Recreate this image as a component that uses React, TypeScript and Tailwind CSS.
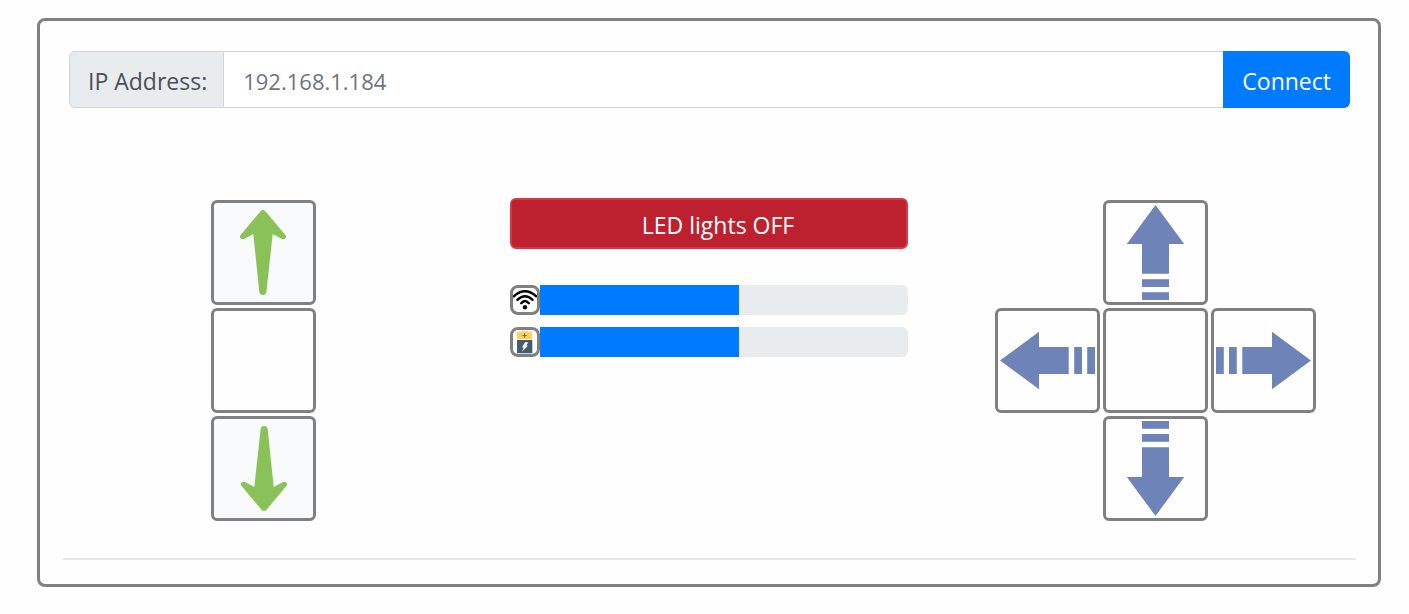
import type { ReactNode } from "react";

function GreenArrow({ down = false }: { down?: boolean }) {
  return (
    <svg viewBox="0 0 99 99" className="block size-full" aria-hidden="true">
      <path
        transform={down ? "rotate(180 49.5 49.5)" : undefined}
        fill="#8ac158"
        d="M46.8 7.9 Q49 6 51.2 7.9 L71.4 31.9 C73.3 34.5 70.8 37 68 35.9 L58.7 31 L52.4 88.8 Q51.8 92 48.8 92 Q45.9 92 45.3 88.8 L39.3 31 L30 35.9 C27.2 37 24.7 34.5 26.6 31.9 Z"
      />
    </svg>
  );
}

function BlueArrow({ angle = 0 }: { angle?: number }) {
  return (
    <svg viewBox="0 0 99 99" className="block size-full" aria-hidden="true">
      <g transform={`rotate(${angle} 49.5 49.5)`} fill="#6e84b9">
        <path d="M49.5 2 L78.2 41 H63 V70.7 H36 V41 H20.8 Z" />
        <path d="M36 76.2 H63 V84 H36 Z" />
        <path d="M36 89.2 H63 V97 H36 Z" />
      </g>
    </svg>
  );
}

function WifiIcon() {
  return (
    <svg viewBox="0 0 24 24" className="block size-full" aria-hidden="true">
      <g fill="none" stroke="#000" strokeWidth="2.4" strokeLinecap="round">
        <path d="M0.8 8.3 Q12 -1.6 23.2 8.3" />
        <path d="M4.4 11.9 Q12 4.4 19.6 11.9" />
        <path d="M8.2 15.2 Q12 10.8 15.8 15.2" />
      </g>
      <circle cx="12" cy="19.2" r="2.2" />
    </svg>
  );
}

function BatteryIcon() {
  return (
    <svg viewBox="0 0 24 24" className="block size-full" aria-hidden="true">
      <path d="M9 0.6 H15 V2 H9 Z" fill="#dcdcdc" />
      <path d="M4 1.8 H19.3 V9.3 H4 Z" fill="#fdd05b" />
      <path d="M11.6 3.4 V7.8 M9.4 5.6 H13.8" stroke="#6b6a58" strokeWidth="1" />
      <path d="M4 10.1 H19.3 V23.3 H4 Z" fill="#435c6e" />
      <path d="M12 12.2 L15.2 12.2 L13.4 15.4 L14.9 15.8 L8.8 21.8 L10.7 17.7 L9 17.2 Z" fill="#fff" />
    </svg>
  );
}

function PadButton({ label, tinted = false, className = "", children }: {
  label: string;
  tinted?: boolean;
  className?: string;
  children?: ReactNode;
}) {
  return (
    <button
      type="button"
      aria-label={label}
      className={`size-[105px] rounded-md border-3 border-[#808080] ${tinted ? "bg-[#f8fafc]" : "bg-[#fefefe]"} ${className}`}
    >
      {children}
    </button>
  );
}

function Meter({ label, value, icon }: { label: string; value: number; icon: ReactNode }) {
  return (
    <div
      role="progressbar"
      aria-label={label}
      aria-valuenow={value}
      aria-valuemin={0}
      aria-valuemax={100}
      className="flex h-[30px] overflow-hidden rounded-md bg-[#e9ecef]"
    >
      <div className="bg-[#fefefe]">
        <div className="size-[30px] rounded-lg border-3 border-[#808080] bg-white">{icon}</div>
      </div>
      <div className="bg-[#007bff]" style={{ width: `${value}%` }} />
    </div>
  );
}

export default function App() {
  return (
    <div className="min-h-screen bg-[#fefefe] pt-[18px] pr-7 pb-7 pl-[37px] font-['Open_Sans','Noto_Sans',sans-serif] text-[23px] leading-8">
      <main className="rounded-lg border-3 border-[#808080] pt-[30px] pb-6">
        <form className="mr-7 ml-[29px] flex h-[57px]" onSubmit={(e) => e.preventDefault()}>
          <label
            htmlFor="ip"
            className="flex items-center rounded-l-md border border-[#ced4da] bg-[#e9ecef] pt-0.5 pr-4 pl-[18px] text-[#495057]"
          >
            IP Address:
          </label>
          <input
            id="ip"
            type="text"
            placeholder="192.168.1.184"
            className="min-w-0 flex-1 border-y border-[#ced4da] bg-white px-[19px] pt-0.5 text-[22px] text-[#495057] outline-none placeholder:text-[#6c757d]"
          />
          <button type="submit" className="rounded-r-md bg-[#007bff] px-[19px] pt-0.5 text-white">
            Connect
          </button>
        </form>

        <div className="mt-[90px] grid grid-cols-3">
          <div className="flex flex-col items-center gap-[3px] pt-0.5">
            <PadButton label="Up" tinted><GreenArrow /></PadButton>
            <PadButton label="Hold" />
            <PadButton label="Down" tinted><GreenArrow down /></PadButton>
          </div>

          <div className="px-6">
            <button
              type="button"
              className="h-[51px] w-full rounded-md border-2 border-[#dc3545] bg-[#bd2130] pt-0.5 pl-[18px] text-white"
            >
              LED lights OFF
            </button>
            <div className="mt-9 flex flex-col gap-3">
              <Meter label="Signal" value={50} icon={<WifiIcon />} />
              <Meter label="Battery" value={50} icon={<BatteryIcon />} />
            </div>
          </div>

          <div className="grid grid-cols-[repeat(3,105px)] content-start justify-center gap-[3px] pt-0.5">
            <PadButton label="Forward" className="col-start-2"><BlueArrow /></PadButton>
            <PadButton label="Left" className="col-start-1"><BlueArrow angle={-90} /></PadButton>
            <PadButton label="Stop" />
            <PadButton label="Right"><BlueArrow angle={90} /></PadButton>
            <PadButton label="Backward" className="col-start-2"><BlueArrow angle={180} /></PadButton>
          </div>
        </div>

        <hr className="mr-[22px] ml-[23px] mt-[37px] border-t-2 border-[#e6e6e6]" />
      </main>
    </div>
  );
}
